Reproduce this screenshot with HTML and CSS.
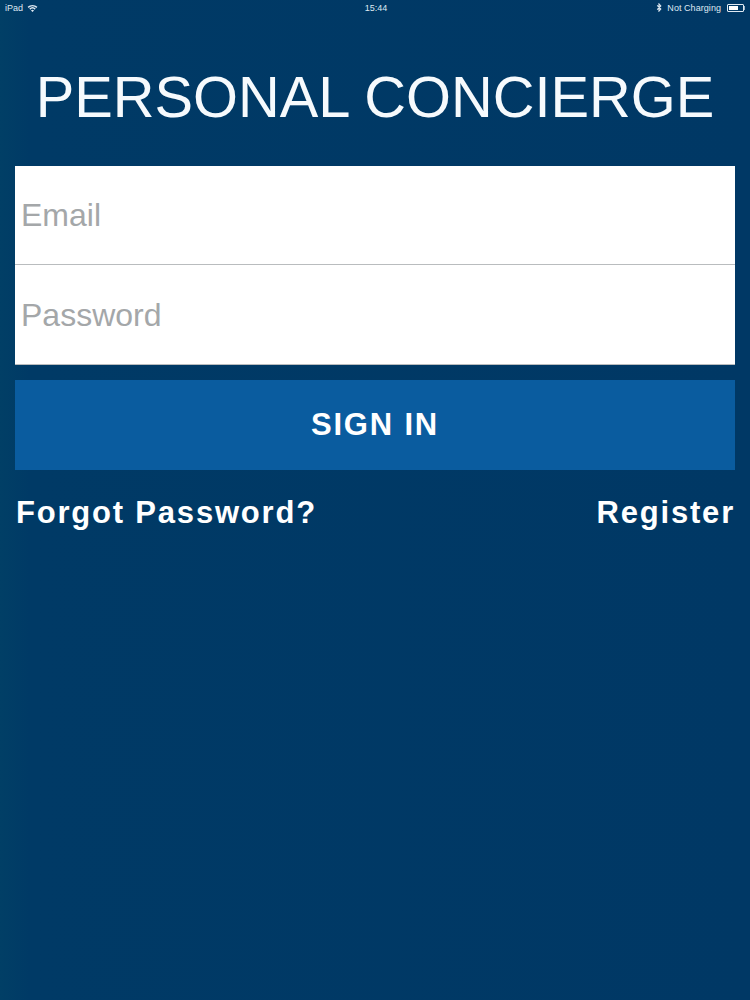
FILE: index.html
```html
<!DOCTYPE html>
<html lang="en">
<head>
<meta charset="utf-8">
<title>Personal Concierge</title>
<link rel="stylesheet" href="styles.css">
</head>
<body>
<main class="screen">
  <header class="status">
    <div class="status-left">
      <span>iPad</span>
      <svg class="wifi" viewBox="0 0 12 9" width="11" height="8"><path d="M0.5 3.2A8 8 0 0 1 11.5 3.2L10.4 4.4A6.4 6.4 0 0 0 1.6 4.4Z M2.4 5.2A5.2 5.2 0 0 1 9.6 5.2L8.5 6.4A3.6 3.6 0 0 0 3.5 6.4Z M4.3 7.2A2.4 2.4 0 0 1 7.7 7.2L6 9Z" fill="#dfe9f2"/></svg>
    </div>
    <div class="status-time">15:44</div>
    <div class="status-right">
      <svg class="bt" viewBox="0 0 6 10" width="6" height="9"><path d="M1 2.6L5 6.8L3 9V1L5 3.2L1 7.4" fill="none" stroke="#dfe9f2" stroke-width="1.2"/></svg>
      <span class="charging">Not Charging</span>
      <span class="battery"><span class="battery-fill"></span></span>
      <span class="battery-tip"></span>
    </div>
  </header>
  <h1 class="title">PERSONAL CONCIERGE</h1>
  <form class="login">
    <div class="fields">
      <div class="field">Email</div>
      <div class="field field-last">Password</div>
    </div>
    <div class="submit">SIGN IN</div>
    <div class="links">
      <span>Forgot Password?</span>
      <span>Register</span>
    </div>
  </form>
</main>
</body>
</html>
```
FILE: styles.css
```css
* { box-sizing: border-box; }
html, body { margin: 0; padding: 0; }
body {
  width: 750px;
  height: 1000px;
  overflow: hidden;
  font-family: "Liberation Sans", Arial, sans-serif;
}
.screen {
  width: 750px;
  height: 1000px;
  background: linear-gradient(90deg, #013f66 0, #003a66 30px, #003865 100%);
  color: #fff;
}
.status {
  height: 15px;
  padding: 0 5px;
  display: grid;
  grid-template-columns: 1fr auto 1fr;
  align-items: center;
  font-size: 9px;
  color: #dfe9f2;
}
.status-left { display: flex; align-items: center; gap: 4px; }
.status-right { display: flex; align-items: center; justify-content: flex-end; gap: 5px; }
.status-time { margin-left: 2px; }
.charging { letter-spacing: 0.05px; }
.battery {
  width: 17px;
  height: 8px;
  margin-left: 1px;
  border: 1px solid #dfe9f2;
  border-radius: 1px;
  padding: 1px;
  display: flex;
}
.battery-fill { width: 9px; background: #fff; }
.battery-tip {
  width: 1px;
  height: 4px;
  margin-left: -5px;
  background: #9fb7cb;
}
.title {
  margin: 49px 0 0;
  height: 67px;
  font-size: 57.8px;
  line-height: 67px;
  font-weight: 400;
  text-align: center;
  white-space: nowrap;
  color: #f6fafd;
}
.login { margin: 35px 15px 0; }
.fields { background: #fff; }
.field {
  height: 99px;
  padding-left: 6px;
  display: flex;
  align-items: center;
  font-size: 32px;
  color: #a4a7a9;
  border-bottom: 1px solid #b9bcbe;
}
.field-last { height: 100px; padding-top: 2px; }
.submit {
  margin-top: 15px;
  height: 90px;
  background: #0a5c9f;
  display: flex;
  align-items: center;
  justify-content: center;
  font-size: 31px;
  font-weight: 700;
  letter-spacing: 1.8px;
}
.links {
  margin-top: 25px;
  padding-left: 1px;
  display: flex;
  justify-content: space-between;
  font-size: 31px;
  line-height: 36px;
  font-weight: 700;
  letter-spacing: 1.8px;
}
```
